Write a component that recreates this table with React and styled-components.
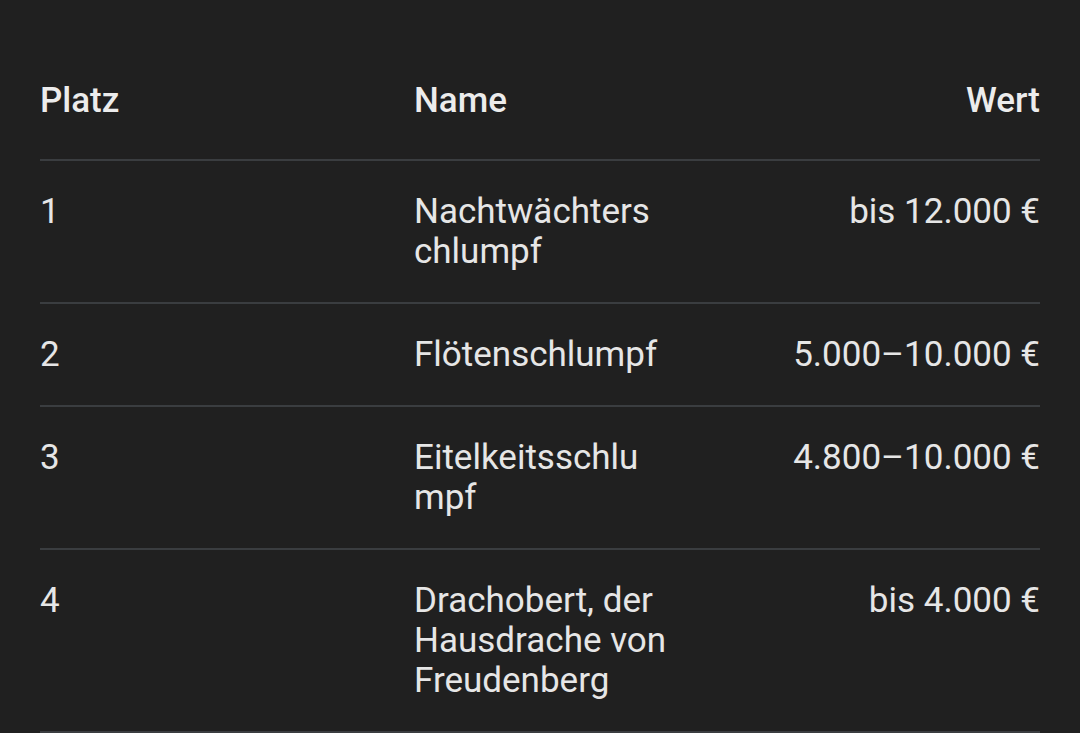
import React from 'react';
import styled, { createGlobalStyle } from 'styled-components';

const GlobalStyle = createGlobalStyle`
  html, body {
    margin: 0;
    padding: 0;
    background-color: #202020;
  }
  body {
    font-family: Roboto, "Liberation Sans", sans-serif;
    color: #e8e8e8;
  }
`;

const Wrapper = styled.div`
  padding: 52px 40px 0;
  min-height: 733px;
  box-sizing: border-box;
  background-color: #202020;
`;

const Row = styled.div`
  display: grid;
  grid-template-columns: 374px 262px 1fr;
  border-bottom: 2px solid #3a3d40;
  padding: ${(p) => (p.$head ? '29px 0 38px' : '31px 0 30px')};
`;

const Cell = styled.div`
  font-size: 35px;
  line-height: 40px;
  font-weight: ${(p) => (p.$head ? 500 : 400)};
  text-align: ${(p) => (p.$right ? 'right' : 'left')};
  color: ${(p) => (p.$head ? '#ececec' : '#e6e6e6')};
`;

const NameCell = styled(Cell)`
  overflow-wrap: anywhere;
`;

// long single words break where the original cell wrapped them
const rows = [
  { place: '1', name: ['Nachtwächters', 'chlumpf'], value: 'bis 12.000 €' },
  { place: '2', name: ['Flötenschlumpf'], value: '5.000–10.000 €' },
  { place: '3', name: ['Eitelkeitsschlu', 'mpf'], value: '4.800–10.000 €' },
  { place: '4', name: ['Drachobert, der Hausdrache von Freudenberg'], value: 'bis 4.000 €' },
];

const App = () => (
  <Wrapper>
    <GlobalStyle />
    <Row $head>
      <Cell $head>Platz</Cell>
      <Cell $head>Name</Cell>
      <Cell $head $right>Wert</Cell>
    </Row>
    {rows.map((r) => (
      <Row key={r.place}>
        <Cell>{r.place}</Cell>
        <NameCell>
          {r.name.map((part, i) => (
            <React.Fragment key={i}>
              {i > 0 && <wbr />}
              {part}
            </React.Fragment>
          ))}
        </NameCell>
        <Cell $right>{r.value}</Cell>
      </Row>
    ))}
  </Wrapper>
);

export default App;
